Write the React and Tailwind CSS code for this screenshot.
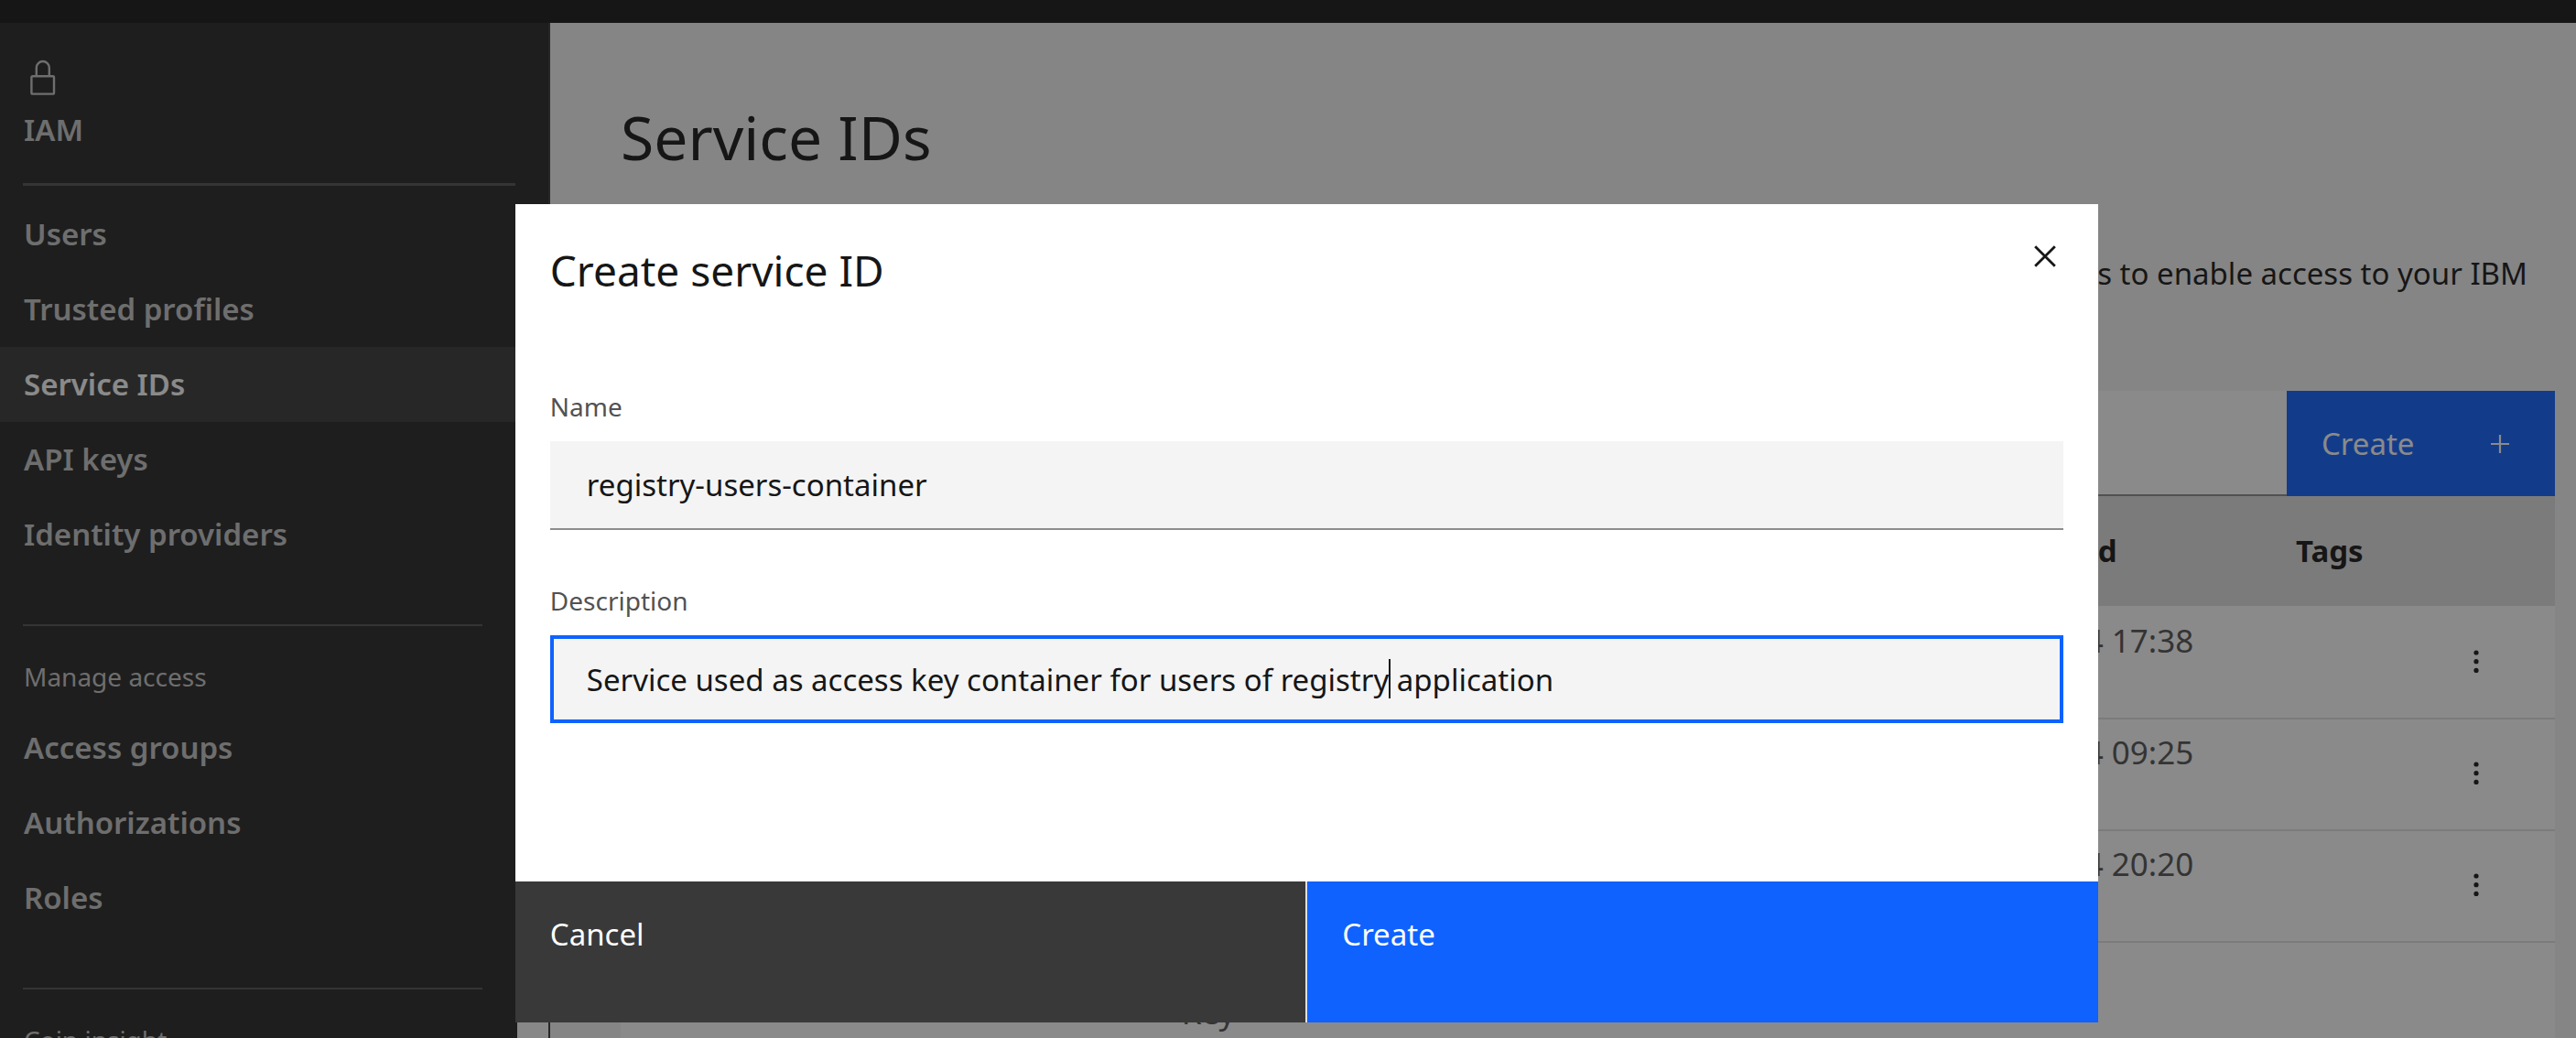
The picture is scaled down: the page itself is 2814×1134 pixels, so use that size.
const ACCESS_LINKS = ["Users", "Trusted profiles", "Service IDs", "API keys", "Identity providers"];
const MANAGE_LINKS = ["Access groups", "Authorizations", "Roles"];

const ROWS = [
  { name: "registry-app", description: ["Registry"], modified: "1-5-2024 17:38" },
  { name: "backup-job", description: ["Backup"], modified: "1-4-2024 09:25" },
  { name: "monitoring", description: ["Metrics"], modified: "1-3-2024 20:20" },
  { name: "storage", description: ["Storage", "Key"], modified: "" },
];

function LockIcon() {
  return (
    <svg width="28" height="40" viewBox="0 0 28 40" fill="none" stroke="currentColor" strokeWidth="2.4" aria-hidden="true">
      <rect x="1.4" y="18.2" width="24.6" height="19.4" rx="1.4" />
      <path d="M6.8 18V9a7 7 0 0 1 14 0v9" />
    </svg>
  );
}

function PlusIcon() {
  return (
    <svg width="20" height="20" viewBox="0 0 20 20" stroke="currentColor" strokeWidth="2.2" aria-hidden="true">
      <path d="M10 0v20M0 10h20" />
    </svg>
  );
}

function CloseIcon() {
  return (
    <svg width="24" height="24" viewBox="0 0 24 24" fill="none" stroke="currentColor" strokeWidth="2.8" aria-hidden="true">
      <path d="M1.2 1.2l21.6 21.6M22.8 1.2l-21.6 21.6" />
    </svg>
  );
}

function OverflowIcon() {
  return (
    <svg width="20" height="30" viewBox="0 0 20 30" fill="currentColor" aria-hidden="true">
      <circle cx="10" cy="4" r="2.6" />
      <circle cx="10" cy="13.7" r="2.6" />
      <circle cx="10" cy="23.4" r="2.6" />
    </svg>
  );
}

function NavLinks({ items, current }) {
  return (
    <ul>
      {items.map((item) => (
        <li key={item}>
          <a
            href="#"
            aria-current={item === current ? "page" : undefined}
            className={
              item === current
                ? "flex h-[82px] items-center bg-[#393939] pl-[26px] text-[33px] leading-[46px] font-semibold text-white"
                : "flex h-[82px] items-center pl-[26px] text-[33px] leading-[46px] font-semibold text-[#c6c6c6]"
            }
          >
            {item}
          </a>
        </li>
      ))}
    </ul>
  );
}

function Sidebar() {
  return (
    <aside className="flex w-[601px] shrink-0 flex-col border-r-2 border-[#393939] bg-[#262626] text-[#c6c6c6]">
      <div className="pt-10">
        <div className="pl-[33px]">
          <LockIcon />
        </div>
        <h2 className="mt-[14px] pl-[26px] text-[33px] leading-[46px] font-semibold">IAM</h2>
        <hr className="mt-[35px] mr-9 ml-[25px] border-t-3 border-[#525252]" />
      </div>
      <div className="flex min-h-0 flex-1 overflow-hidden">
        <nav className="flex-1 pt-3" aria-label="IAM">
          <NavLinks items={ACCESS_LINKS} current="Service IDs" />
          <hr className="mt-[57px] mr-[38px] ml-[25px] border-t-2 border-[#525252]" />
          <h3 className="mt-9 mb-[18px] pl-[26px] text-[28px] leading-[38px]">Manage access</h3>
          <NavLinks items={MANAGE_LINKS} />
          <hr className="mt-[57px] mr-[38px] ml-[25px] border-t-2 border-[#525252]" />
          <h3 className="mt-9 pl-[26px] text-[28px] leading-[38px]">Coin insight</h3>
        </nav>
        <div className="mt-6 w-[34px] bg-[#fafafa]" />
      </div>
    </aside>
  );
}

function ServiceTable() {
  return (
    <table className="w-full table-fixed border-collapse bg-white text-left text-[#161616]">
      <thead>
        <tr className="h-[121px] border-b-2 border-white bg-[#e0e0e0] text-[33px] leading-[46px] font-semibold">
          <th scope="col" className="w-[29%] pl-10">Name</th>
          <th scope="col">Description</th>
          <th scope="col" className="w-[353px] pl-3">Modified</th>
          <th scope="col" className="w-[155px]">Tags</th>
          <th scope="col" className="w-[128px]" aria-label="Actions" />
        </tr>
      </thead>
      <tbody className="text-[35px] leading-10 text-[#525252]">
        {ROWS.map((row) => (
          <tr key={row.name} className="h-[122px] border-b-2 border-[#e0e0e0] align-top">
            <td className="pt-4 pl-10">{row.name}</td>
            <td className="pt-4">
              {row.description.map((line) => (
                <div key={line}>{line}</div>
              ))}
            </td>
            <td className="pt-4">{row.modified}</td>
            <td />
            <td className="align-middle">
              {row.modified && (
                <button type="button" aria-label="Row actions" className="ml-8 block text-[#161616]">
                  <OverflowIcon />
                </button>
              )}
            </td>
          </tr>
        ))}
      </tbody>
    </table>
  );
}

function Main() {
  return (
    <main className="min-w-0 flex-1 pt-[84px] pr-[23px] pl-[77px] text-[#161616]">
      <h1 className="text-[66px] leading-[80px]">Service IDs</h1>
      <p className="mt-[87px] pr-[30px] text-right text-[33px] leading-[46px] whitespace-nowrap">
        Service IDs identify a service or application like a user ID identifies a user. Create API keys to enable access to your IBM
      </p>
      <div className="mt-[105px] flex h-[115px]">
        <input type="search" aria-label="Search" className="min-w-0 flex-1 border-b-2 border-[#8d8d8d] bg-white outline-none" />
        <button
          type="button"
          className="flex w-[293px] items-center justify-between bg-[#0f62fe] pr-[50px] pl-[38px] text-[33px] leading-[46px] text-white"
        >
          Create
          <PlusIcon />
        </button>
      </div>
      <ServiceTable />
    </main>
  );
}

function CreateDialog() {
  return (
    <div
      role="dialog"
      aria-modal="true"
      aria-labelledby="dialog-title"
      className="mt-[223px] ml-[20%] w-[1729px] max-w-[80%] self-start bg-white text-[#161616]"
    >
      <div className="flex items-start justify-between pt-[42px] pr-[46px] pl-[38px]">
        <h2 id="dialog-title" className="text-[46px] leading-[60px]">Create service ID</h2>
        <button type="button" aria-label="Close" className="mt-[3px]">
          <CloseIcon />
        </button>
      </div>
      <form className="px-[38px] pt-[100px] pb-[173px]">
        <label htmlFor="service-name" className="block text-[28px] leading-[38px] text-[#525252]">Name</label>
        <input
          id="service-name"
          type="text"
          defaultValue="registry-users-container"
          className="mt-[19px] block h-[97px] w-full border-b-2 border-[#8d8d8d] bg-[#f4f4f4] px-10 text-[33px] leading-[46px] outline-none"
        />
        <label htmlFor="service-description" className="mt-[58px] block text-[28px] leading-[38px] text-[#525252]">Description</label>
        <div className="relative mt-[19px]">
          <input
            id="service-description"
            type="text"
            defaultValue="Service used as access key container for users of registry application"
            className="block h-24 w-full border-4 border-[#0f62fe] bg-[#f4f4f4] px-9 text-[33px] leading-[46px] outline-none"
          />
          <span className="absolute top-[26px] left-[916px] h-[43px] w-[2px] bg-[#161616]" />
        </div>
      </form>
      <div className="flex h-[154px] gap-[2px] bg-[#e0e0e0] text-[33px] leading-[46px] text-white">
        <button type="button" className="flex flex-1 items-start bg-[#393939] pt-[35px] pl-[38px]">Cancel</button>
        <button type="button" className="flex flex-1 items-start bg-[#0f62fe] pt-[35px] pl-[38px]">Create</button>
      </div>
    </div>
  );
}

export default function App() {
  return (
    <div className="flex h-screen flex-col overflow-hidden bg-[#f4f4f4] font-['Noto_Sans',sans-serif]">
      <header className="h-[25px] shrink-0 bg-[#161616]" />
      <div className="flex min-h-0 flex-1 overflow-hidden">
        <Sidebar />
        <Main />
      </div>
      <div className="fixed inset-0 flex bg-[#161616]/50">
        <CreateDialog />
      </div>
    </div>
  );
}
